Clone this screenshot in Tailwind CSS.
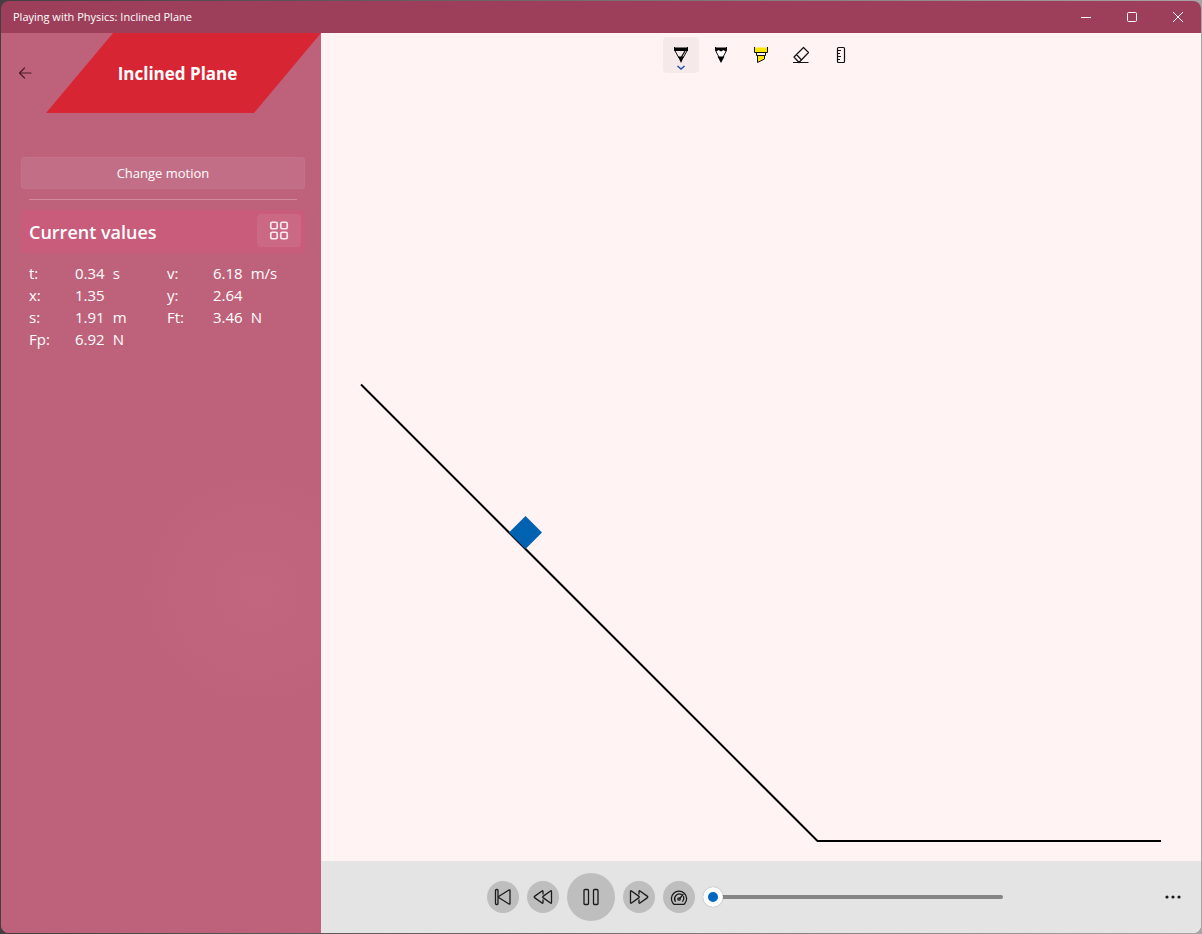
<!DOCTYPE html>
<html lang="en">
<head>
<meta charset="utf-8">
<meta name="viewport" content="width=device-width, initial-scale=1">
<title>Playing with Physics: Inclined Plane</title>
<script src="https://cdn.jsdelivr.net/npm/@tailwindcss/browser@4"></script>
</head>
<body class="flex min-h-screen bg-linear-to-r from-[#453d41] to-[#a8a4a5] p-px font-['Open_Sans','Noto_Sans',sans-serif]">
<div class="flex flex-1 flex-col overflow-hidden rounded-lg">
  <header class="flex h-8 shrink-0 items-center justify-between bg-[#9d3f5a] pl-3 text-white">
    <h1 class="text-[11px] font-medium">Playing with Physics: Inclined Plane</h1>
    <div class="flex h-full">
      <button class="grid w-[46px] place-items-center" aria-label="Minimize"><svg class="size-3" viewBox="0 0 12 12" stroke="currentColor" shape-rendering="crispEdges"><path d="M1 6.5h10"/></svg></button>
      <button class="grid w-[46px] place-items-center" aria-label="Maximize"><svg class="size-3" viewBox="0 0 12 12" fill="none" stroke="currentColor"><rect x="1.5" y="1.5" width="9" height="9" rx="1"/></svg></button>
      <button class="grid w-[46px] place-items-center" aria-label="Close"><svg class="size-3" viewBox="0 0 12 12" stroke="currentColor"><path d="M1 1l10 10M11 1L1 11"/></svg></button>
    </div>
  </header>

  <div class="flex flex-1">
    <aside class="flex w-80 shrink-0 flex-col bg-[#be627b] bg-[radial-gradient(circle_at_80%_62%,#c2667f_0,#be627b_120px)] text-white">
      <div class="flex h-20">
        <button class="grid w-[45px] place-items-center pl-0.5 text-[#4a1d2a]" aria-label="Back"><svg class="size-4" viewBox="0 0 16 16" fill="none" stroke="currentColor" stroke-width="1.200" stroke-linecap="round" stroke-linejoin="round"><path d="M2.500 8h11.500M7.500 3L2.500 8l5 5"/></svg></button>
        <div class="grid flex-1 place-items-center bg-[#d72533] pt-0.5 pr-3 [clip-path:polygon(24.400%_0,100%_0,75.600%_100%,0_100%)]">
          <h2 class="text-[17px] font-bold">Inclined Plane</h2>
        </div>
      </div>
      <div class="mt-11 mr-4 ml-5 flex flex-col">
        <button class="h-8 rounded bg-[#c26e87] pt-0.5 text-[13px] font-medium ring-1 ring-[#c4728a] ring-inset">Change motion</button>
        <hr class="mx-2 mt-2.5 border-[#d28a9f]">
        <div class="mt-2.5 flex h-[43px] items-center justify-between bg-[#c95b7b] pr-1 pl-2">
          <h3 class="pt-0.5 text-[18px] font-semibold">Current values</h3>
          <button class="mb-0.5 grid h-[33px] w-11 place-items-center rounded bg-[#cb6883]" aria-label="Choose values">
            <svg class="size-5" viewBox="0 0 20 20" fill="none" stroke="#ffe9ef" stroke-width="1.700"><rect x="1.750" y="1.250" width="6.500" height="6.500" rx="1.500"/><rect x="11.750" y="1.250" width="6.500" height="6.500" rx="1.500"/><rect x="1.750" y="11.250" width="6.500" height="6.500" rx="1.500"/><rect x="11.750" y="11.250" width="6.500" height="6.500" rx="1.500"/></svg>
          </button>
        </div>
        <dl class="mt-[9px] grid grid-cols-[46px_92px_46px_1fr] pl-2 text-[15px] leading-[22px]">
          <dt>t:</dt><dd class="flex gap-2"><span>0.34</span><span>s</span></dd>
          <dt>v:</dt><dd class="flex gap-2"><span>6.18</span><span>m/s</span></dd>
          <dt>x:</dt><dd>1.35</dd>
          <dt>y:</dt><dd>2.64</dd>
          <dt>s:</dt><dd class="flex gap-2"><span>1.91</span><span>m</span></dd>
          <dt>Ft:</dt><dd class="flex gap-2"><span>3.46</span><span>N</span></dd>
          <dt>Fp:</dt><dd class="flex gap-2"><span>6.92</span><span>N</span></dd>
        </dl>
      </div>
    </aside>

    <main class="flex min-w-0 flex-1 flex-col bg-[#fff3f3]">
      <div class="flex h-11 shrink-0 items-center justify-center gap-1" role="toolbar" aria-label="Ink tools">
        <button class="grid size-9 place-items-center rounded bg-[#f5e9e9]" aria-label="Ballpoint pen">
          <svg class="size-9" viewBox="0 0 36 36" fill="none"><path d="M11.500 10v3l4.500 8h4l4.500-8v-3" stroke="#111"/><path d="M11 10.500h14V14H11.500z" fill="#000"/><path d="M15 19.500h6L18 26z" fill="#000"/><path d="M22 14l-3.500 6" stroke="#111" stroke-width="1.300"/><path d="M14.500 29l3.500 3 3.500-3" stroke="#1f4fae" stroke-width="1.500"/></svg>
        </button>
        <button class="grid size-9 place-items-center rounded" aria-label="Pencil">
          <svg class="size-9" viewBox="0 0 36 36"><path d="M12.500 10v3.500l4 7.500h3l4-7.500V10" fill="#fff" stroke="#111"/><path d="M12 10.500h12v2.500l-1.500 1.500-2-1.500-2.500 1.500-2.500-1.500-2 1.500L12 13z" fill="#000"/><path d="M14.500 19.500h7L18 26z" fill="#000"/></svg>
        </button>
        <button class="grid size-9 place-items-center rounded" aria-label="Highlighter">
          <svg class="size-9" viewBox="0 0 36 36"><path d="M11.500 10.500h13v5h-13z" fill="#ffe600"/><path d="M11.500 10v5.500h13V10M13.500 15.500v3h9v-3" fill="none" stroke="#111"/><path d="M14.500 18.500h7v3.500l-7 3.500z" fill="#ffe600" stroke="#111"/></svg>
        </button>
        <button class="grid size-9 place-items-center rounded" aria-label="Eraser">
          <svg class="size-9" viewBox="0 0 36 36" fill="none" stroke="#111" stroke-width="1.200" stroke-linejoin="round"><path d="M20.500 10.500L11 20l5 5.500 9.500-10zM13.500 17.500l5 5.500M10 25.500h15.500"/></svg>
        </button>
        <button class="grid size-9 place-items-center rounded" aria-label="Ruler">
          <svg class="size-9" viewBox="0 0 36 36" fill="none" stroke="#111" stroke-width="1.200"><rect x="14.500" y="10.500" width="7" height="15" rx="1"/><path d="M15 13.500h3M15 16.500h2M15 19.500h3M15 22.500h2"/></svg>
        </button>
      </div>

      <div class="grid flex-1">
        <svg class="size-full" viewBox="0 44 880 784" role="img" aria-label="Block sliding down an inclined plane">
          <path d="M40 351.500L496.500 808H840" fill="none" stroke="#000" stroke-width="2"/>
          <path d="M204.500 483l16.500 16.500-16.500 16.500-16.500-16.500z" fill="#0062b1"/>
        </svg>
      </div>

      <footer class="grid h-18 shrink-0 grid-cols-[1fr_auto_1fr] items-center bg-[#e4e4e4] text-[#1a1a1a]">
        <div class="col-start-2 flex items-center gap-2 pr-8">
          <button class="grid size-8 place-items-center rounded-full bg-[#bebebe]" aria-label="Restart"><svg class="size-5" viewBox="0 0 20 20" fill="none" stroke="currentColor" stroke-width="1.300" stroke-linejoin="round"><rect x="2.500" y="2.500" width="2.500" height="15" rx="1"/><path d="M17 3.500v13q0 1-1 .5L6 10.700q-.8-.7 0-1.400L16 3q1-.5 1 .5z"/></svg></button>
          <button class="grid size-8 place-items-center rounded-full bg-[#bebebe]" aria-label="Slower"><svg class="size-5" viewBox="0 0 20 20" fill="none" stroke="currentColor" stroke-width="1.300" stroke-linejoin="round"><path d="M10 7.500V4.500q0-1.200-1-.5L1.500 9.400q-.7.600 0 1.200L9 16q1 .7 1-.5v-3M18.500 4.500v11q0 1.200-1 .5L10 10.600q-.7-.6 0-1.200L17.500 4q1-.7 1 .5z"/></svg></button>
          <button class="grid size-12 place-items-center rounded-full bg-[#bebebe]" aria-label="Pause"><svg class="size-5" viewBox="0 0 20 20" fill="none" stroke="currentColor" stroke-width="1.300"><rect x="3" y="2.500" width="4.500" height="15" rx="1"/><rect x="12.500" y="2.500" width="4.500" height="15" rx="1"/></svg></button>
          <button class="grid size-8 place-items-center rounded-full bg-[#bebebe]" aria-label="Faster"><svg class="size-5" viewBox="0 0 20 20" fill="none" stroke="currentColor" stroke-width="1.300" stroke-linejoin="round"><path d="M10 7.500V4.500q0-1.200 1-.5l7.500 5.400q.7.600 0 1.200L11 16q-1 .7-1-.5v-3M1.500 4.500v11q0 1.200 1 .5l7.500-5.400q.7-.6 0-1.200L2.500 4q-1-.7-1 .5z"/></svg></button>
          <button class="grid size-8 place-items-center rounded-full bg-[#bebebe]" aria-label="Speed"><svg class="size-5" viewBox="0 0 20 20" fill="none" stroke="currentColor" stroke-width="1.300" stroke-linecap="round" stroke-linejoin="round"><path d="M5.500 17.300h9q.8 0 1.200-.6A7.600 7.600 0 1 0 4.300 16.700q.4.600 1.200.6z"/><path d="M6.300 14.300A4.800 4.800 0 0 1 12.300 7.400M14.600 9.700A4.800 4.800 0 0 1 13.700 14.300M14 7.500L10.800 11.500"/><circle cx="10" cy="12" r="1.200"/></svg></button>
          <input type="range" min="0" max="100" value="0" aria-label="Time" class="h-5 w-[300px] appearance-none bg-transparent [&::-webkit-slider-runnable-track]:h-1 [&::-webkit-slider-runnable-track]:rounded-full [&::-webkit-slider-runnable-track]:bg-[#858585] [&::-webkit-slider-thumb]:-mt-2 [&::-webkit-slider-thumb]:size-5 [&::-webkit-slider-thumb]:appearance-none [&::-webkit-slider-thumb]:rounded-full [&::-webkit-slider-thumb]:border-[5px] [&::-webkit-slider-thumb]:border-white [&::-webkit-slider-thumb]:bg-[#0067c0] [&::-webkit-slider-thumb]:shadow-[0_0_1px_#777]">
        </div>
        <button class="mr-3 grid h-8 w-8 place-items-center justify-self-end" aria-label="More"><svg class="size-5" viewBox="0 0 20 20" fill="currentColor"><circle cx="4" cy="10" r="1.600"/><circle cx="10" cy="10" r="1.600"/><circle cx="16" cy="10" r="1.600"/></svg></button>
      </footer>
    </main>
  </div>
</div>
</body>
</html>
